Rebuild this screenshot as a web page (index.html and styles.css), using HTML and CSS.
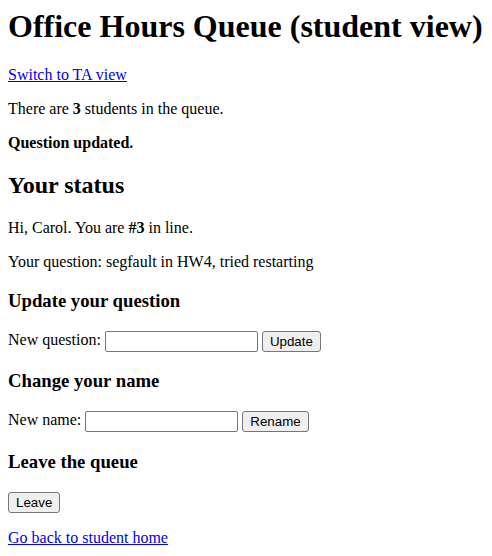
FILE: index.html
```html
<!DOCTYPE html>
<html lang="en">
<head>
  <meta charset="UTF-8">
  <title>Office Hours Queue</title>
  <link rel="stylesheet" href="styles.css">
</head>
<body>
  <h1 class="title">Office Hours Queue (student view)</h1>
  <p><a href="#">Switch to TA view</a></p>
  <p>There are <b>3</b> students in the queue.</p>
  <p><b>Question updated.</b></p>

  <h2>Your status</h2>
  <p>Hi, Carol. You are <b>#3</b> in line.</p>
  <p>Your question: segfault in HW4, tried restarting</p>

  <h3>Update your question</h3>
  <form>
    <p>New question: <input type="text" name="question"> <button type="button">Update</button></p>
  </form>

  <h3>Change your name</h3>
  <form>
    <p>New name: <input type="text" name="name"> <button type="button">Rename</button></p>
  </form>

  <h3>Leave the queue</h3>
  <form>
    <p><button type="button">Leave</button></p>
  </form>

  <p><a href="#">Go back to student home</a></p>
</body>
</html>
```

FILE: styles.css
```css
body {
  font-family: "Liberation Serif", "Times New Roman", serif;
  font-size: 16px;
}

.title {
  margin-top: 0;
}

a {
  color: #0000ee;
}

input,
button {
  font-family: "Liberation Sans", Arial, sans-serif;
  font-size: 13.33px;
  box-sizing: border-box;
  height: 21px;
  vertical-align: middle;
}

input[type="text"] {
  width: 153px;
  padding: 1px 2px;
  border: 1px solid #767676;
  border-radius: 2px;
}

button {
  padding: 1px 7px;
  border: 1px solid #767676;
  border-radius: 3px;
  background: #efefef;
}
```
